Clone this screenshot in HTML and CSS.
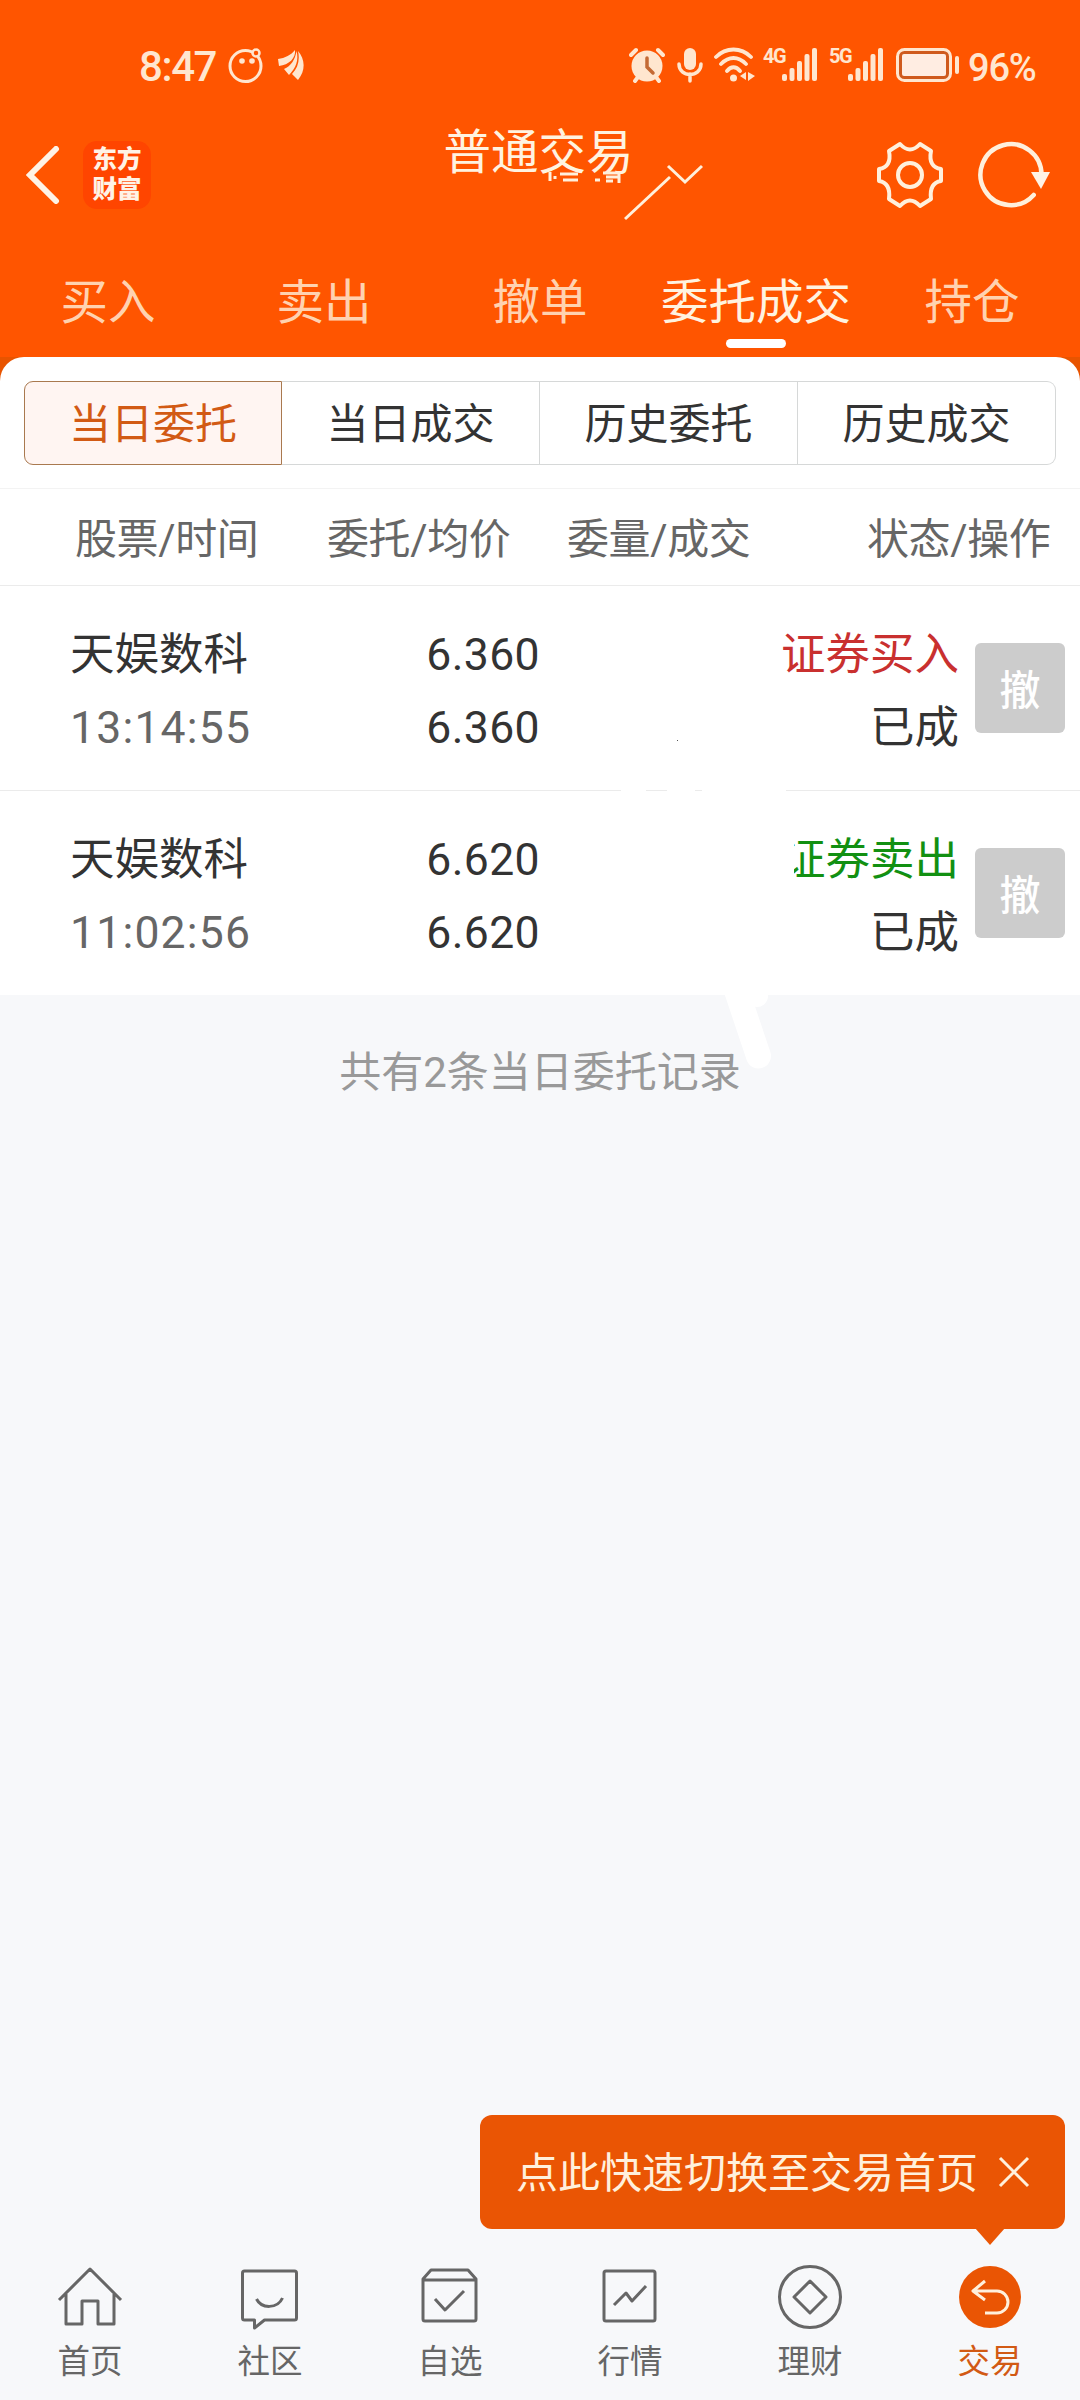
FILE: index.html
```html
<!DOCTYPE html>
<html lang="zh-CN">
  <head>
    <meta charset="UTF-8" />
    <meta name="viewport" content="width=device-width, initial-scale=1.0" />
    <title>普通交易</title>
    <link rel="stylesheet" href="styles.css">
  </head>
  <body>
    <header class="header">
      <div class="status-bar">
        <div class="status-left">
          <span class="clock">8:47</span>
          <svg class="icon-face" width="36" height="36" viewBox="0 0 36 36">
            <circle cx="17.500" cy="19" r="15.500" fill="none" stroke="currentColor" stroke-width="3" />
            <circle cx="28" cy="6" r="3.500" fill="#ff5500" stroke="currentColor" stroke-width="2.500" />
            <circle cx="14" cy="14" r="2.800" fill="currentColor" />
            <circle cx="24" cy="14" r="2.800" fill="currentColor" />
          </svg>
          <svg class="icon-wing" width="28" height="32" viewBox="0 0 28 32" fill="currentColor">
            <path d="M1 10C8 9 14 6 18 1C19 9 12 16 2 17Z" />
            <path d="M19.500 2C22 11 19 19 12 26L7 20C14 17 18 11 19.500 2Z" />
            <path d="M21 2C28 10 29 21 21 31L15 25C21 19 23 11 21 2Z" />
          </svg>
        </div>
        <div class="status-right">
          <svg width="36" height="36" viewBox="0 0 36 36">
            <circle cx="18" cy="19" r="15.500" fill="currentColor" />
            <path d="M2 8L7 3M34 8L29 3M6 34L9 30M30 34L27 30" stroke="currentColor" stroke-width="4" stroke-linecap="round" />
            <path d="M18 11V20L24 26" fill="none" stroke="#c46a35" stroke-width="3.500" stroke-linecap="round" />
          </svg>
          <svg class="icon-mic" width="26" height="36" viewBox="0 0 26 36">
            <rect x="7" y="1" width="12" height="22" rx="6" fill="currentColor" />
            <path d="M2 17C2 31 24 31 24 17M13 27V34" fill="none" stroke="currentColor" stroke-width="3.500" stroke-linecap="round" />
          </svg>
          <svg class="icon-wifi" width="42" height="36" viewBox="0 0 42 36">
            <path d="M2 10C12 0 27 0 37 10M7 17C15 9 24 9 32 17M13 24C17 19 22 19 26 24" fill="none" stroke="currentColor" stroke-width="3.800" stroke-linecap="round" />
            <circle cx="19.500" cy="31" r="3.500" fill="currentColor" />
            <path d="M26 29L32 25V33ZM34 25L41 29L34 34Z" fill="currentColor" />
          </svg>
          <span class="net">4G</span>
          <svg class="icon-bars" width="36" height="36" viewBox="0 0 36 36" fill="currentColor">
            <rect x="0" y="27" width="5" height="7" rx="2" />
            <rect x="7.500" y="21" width="5" height="13" rx="2" />
            <rect x="15" y="14" width="5" height="20" rx="2" />
            <rect x="22.500" y="7" width="5" height="27" rx="2" />
            <rect x="30" y="1" width="5" height="33" rx="2" />
          </svg>
          <span class="net net-5g">5G</span>
          <svg class="icon-bars" width="36" height="36" viewBox="0 0 36 36" fill="currentColor">
            <rect x="0" y="27" width="5" height="7" rx="2" />
            <rect x="7.500" y="21" width="5" height="13" rx="2" />
            <rect x="15" y="14" width="5" height="20" rx="2" />
            <rect x="22.500" y="7" width="5" height="27" rx="2" />
            <rect x="30" y="1" width="5" height="33" rx="2" />
          </svg>
          <svg class="icon-battery" width="64" height="36" viewBox="0 0 64 36">
            <rect x="1.500" y="2.500" width="53" height="31" rx="7" fill="#cf5a1d" stroke="currentColor" stroke-width="3" />
            <rect x="6" y="7" width="44" height="22" rx="2" fill="#ffede2" />
            <rect x="59" y="9" width="4" height="18" rx="2" fill="currentColor" />
          </svg>
          <span class="percent">96%</span>
        </div>
      </div>

      <div class="title-bar">
        <div class="title-left">
          <svg width="34" height="58" viewBox="0 0 34 58">
            <path d="M30 3L4 29L30 55" fill="none" stroke="#fff3e6" stroke-width="6" stroke-linecap="round" />
          </svg>
          <div class="logo">东方<br>财富</div>
        </div>
        <h1 class="title">普通交易</h1>
        <svg class="title-mark" width="160" height="60" viewBox="0 0 160 60" fill="none" stroke="#fff0dc">
          <path d="M7 9V18M12 13V16M17 11H35M20 17H35M60 10H76M63 14H76M76 8V20M63 18H70M52 17H57" stroke-width="3" />
          <path d="M82 56L127 14" stroke-width="3" />
          <path d="M125 3L142 19L159 3" stroke-width="3" />
        </svg>
        <div class="title-right">
          <svg width="68" height="68" viewBox="0 0 68 68" fill="none" stroke="#fff0dc" stroke-width="4" stroke-linejoin="round">
            <path d="M24 3Q34 14 44 3L55 10Q52 26 65 28V40Q53 42 55 58L44 65Q34 54 24 65L13 58Q15 42 3 40V28Q16 26 13 10Z" />
            <circle cx="34" cy="34" r="12" />
          </svg>
          <svg width="74" height="68" viewBox="0 0 74 68">
            <path d="M56.700 54A30.500 30.500 0 1 1 64.500 34" fill="none" stroke="#fff0dc" stroke-width="4.500" stroke-linecap="round" />
            <path d="M54 31H73L64 48Z" fill="#fff3e6" />
          </svg>
        </div>
      </div>

      <nav class="tabs">
        <a class="tab">买入</a>
        <a class="tab">卖出</a>
        <a class="tab">撤单</a>
        <a class="tab active">委托成交</a>
        <a class="tab">持仓</a>
      </nav>
    </header>

    <main class="content">
      <div class="sheet">
        <div class="segments">
          <div class="segment active">当日委托</div>
          <div class="segment">当日成交</div>
          <div class="segment">历史委托</div>
          <div class="segment">历史成交</div>
        </div>
        <div class="table-head">
          <span>股票/时间</span>
          <span>委托/均价</span>
          <span>委量/成交</span>
          <span>状态/操作</span>
        </div>

        <div class="order">
          <div class="stock">
            <p>天娱数科</p>
            <p class="time">13:14:55</p>
          </div>
          <div class="price">
            <p>6.360</p>
            <p>6.360</p>
          </div>
          <div class="state">
            <p class="buy">证券买入</p>
            <p>已成</p>
          </div>
          <button class="cancel">撤</button>
          <i class="dot"></i>
          <i class="gap gap-1"></i>
          <i class="gap gap-2"></i>
          <i class="gap gap-3"></i>
        </div>
        <div class="order">
          <div class="stock">
            <p>天娱数科</p>
            <p class="time">11:02:56</p>
          </div>
          <div class="price">
            <p>6.620</p>
            <p>6.620</p>
          </div>
          <div class="state">
            <p class="sell">证券卖出</p>
            <p>已成</p>
          </div>
          <button class="cancel">撤</button>
        </div>
      </div>

      <div class="summary">
        <p>共有2条当日委托记录</p>
        <svg class="smudge" width="60" height="80" viewBox="0 0 60 80">
          <path d="M16 -6L38.500 61" stroke="#fff" stroke-width="25" stroke-linecap="round" />
          <circle cx="37" cy="1" r="11" fill="#fff" />
        </svg>
      </div>
    </main>

    <footer class="bottom">
      <div class="tip">
        <span>点此快速切换至交易首页</span>
        <svg width="32" height="32" viewBox="0 0 32 32">
          <path d="M2 2L30 30M30 2L2 30" stroke="#fff0dc" stroke-width="3" />
        </svg>
      </div>
      <nav class="bottom-nav">
        <a class="nav-item">
          <svg width="68" height="68" viewBox="0 0 68 68">
            <path d="M3 36L34 5L65 36M10 30V60H26V37H42V60H58V30" />
          </svg>
          <span>首页</span>
        </a>
        <a class="nav-item">
          <svg width="68" height="68" viewBox="0 0 68 68">
            <path d="M8.500 7H58.500Q60.500 7 60.500 9V54Q60.500 56 58.500 56H28.500L18.500 64V56H8.500Q6.500 56 6.500 54V9Q6.500 7 8.500 7ZM20.500 35C25.500 45 41.500 45 46.500 34" />
          </svg>
          <span>社区</span>
        </a>
        <a class="nav-item">
          <svg width="68" height="68" viewBox="0 0 68 68">
            <path d="M7 15L15 6H52L60 15V55Q60 57 58 57H9Q7 57 7 55ZM7 16H60M19 35L29 46L48 27" />
          </svg>
          <span>自选</span>
        </a>
        <a class="nav-item">
          <svg width="68" height="68" viewBox="0 0 68 68">
            <rect x="8" y="7" width="51" height="50" rx="2" />
            <path d="M18 41L30 29L36 37L50 22" />
          </svg>
          <span>行情</span>
        </a>
        <a class="nav-item">
          <svg width="68" height="68" viewBox="0 0 68 68">
            <circle cx="34" cy="33" r="30.500" />
            <path d="M34 17L50 33L34 49L18 33Z" />
          </svg>
          <span>理财</span>
        </a>
        <a class="nav-item active">
          <svg width="68" height="68" viewBox="0 0 68 68">
            <circle cx="34" cy="33" r="31" />
            <path d="M29 17L17 27L29 36M17 27H41A10.500 10.500 0 0 1 41 49H29" />
          </svg>
          <span>交易</span>
        </a>
      </nav>
    </footer>
  </body>
</html>
```

FILE: styles.css
```css
* {
  margin: 0;
  padding: 0;
  box-sizing: border-box;
}

body {
  width: 1080px;
  height: 2400px;
  display: flex;
  flex-direction: column;
  overflow: hidden;
  background-color: #f7f8fa;
  color: #333;
  font-family: Roboto, "Noto Sans CJK SC", sans-serif;
}

svg {
  display: block;
  flex: none;
}

.header {
  height: 357px;
  background-color: #ff5500;
}

/* phone status bar */
.status-bar {
  height: 130px;
  padding: 0 42px 0 139px;
  display: flex;
  justify-content: space-between;
  align-items: center;
  color: #ffe6cf;
}

.status-left,
.status-right {
  display: flex;
  align-items: center;
}

.clock {
  font-size: 42px;
  line-height: 50px;
  width: 77px;
  font-weight: 500;
  letter-spacing: -1.4px;
  padding-top: 4px;
}

.icon-face {
  margin-left: 12px;
}

.icon-wing {
  margin-left: 13px;
}

.icon-mic {
  margin-left: 12px;
}

.icon-wifi {
  margin-left: 11px;
}

.net {
  width: 27px;
  font-size: 20px;
  line-height: 20px;
  font-weight: bold;
  letter-spacing: -1.5px;
  white-space: nowrap;
  margin: -18px -8px 0 7px;
}

.net-5g {
  margin-left: 11px;
}

.icon-battery {
  margin-left: 12px;
}

.percent {
  width: 70px;
  margin-left: 8px;
  padding-top: 5px;
  font-size: 38px;
  line-height: 46px;
  font-weight: 500;
  letter-spacing: -1.2px;
}

/* title */
.title-bar {
  position: relative;
  height: 120px;
  padding: 0 29px 0 26px;
  display: flex;
  justify-content: space-between;
  align-items: center;
}

.title-left,
.title-right {
  display: flex;
  align-items: center;
  margin-top: -31px;
}

.title-left {
  gap: 23px;
}

.title-right {
  gap: 33px;
}

.logo {
  width: 68px;
  height: 68px;
  padding-top: 4px;
  border-radius: 14px;
  background-color: #ff4500;
  color: #fff3e6;
  font-size: 24.5px;
  line-height: 30px;
  font-weight: 900;
  text-align: center;
}

.title {
  font-size: 47.5px;
  line-height: 60px;
  font-weight: normal;
  color: #fff3e0;
  margin: -75px 0 0 50px;
}

.title-mark {
  position: absolute;
  left: 543px;
  top: 33px;
}

.tabs {
  height: 107px;
  display: grid;
  grid-template-columns: repeat(5, 1fr);
}

.tab {
  display: flex;
  flex-direction: column;
  align-items: center;
  padding-top: 21px;
  font-size: 47.5px;
  line-height: 64px;
  color: #ffd2b0;
}

.tab.active {
  color: #fff3e0;
}

.tab.active::after {
  content: "";
  width: 60px;
  height: 9px;
  margin-top: 4px;
  border-radius: 5px;
  background-color: #fff;
}

/* orders */
.content {
  flex: 1;
  background: linear-gradient(#e85400, #e85400) no-repeat 0 0 / 100% 30px;
}

.sheet {
  height: 638px;
  padding-top: 24px;
  border-radius: 24px 24px 0 0;
  background-color: #fff;
}

.segments {
  display: grid;
  grid-template-columns: repeat(4, 1fr);
  margin: 0 24px;
}

.segment {
  height: 84px;
  border: 1px solid #d6d8d8;
  border-left-width: 0;
  font-size: 42px;
  line-height: 86px;
  text-align: center;
}

.segment:last-child {
  border-radius: 0 9px 9px 0;
}

.segment.active {
  border: 1px solid #a9794f;
  border-radius: 9px 0 0 9px;
  background-color: #fff5f2;
  color: #d25a14;
}

.table-head {
  height: 98px;
  margin-top: 23px;
  padding: 0 31px 0 75px;
  display: grid;
  grid-template-columns: 252px 240px 300px 1fr;
  border-top: 1px solid #f3f3f3;
  border-bottom: 1px solid #ebebeb;
  font-size: 42px;
  line-height: 101px;
  letter-spacing: -0.4px;
  color: #666;
  white-space: nowrap;
}

.order {
  position: relative;
  height: 205px;
  padding: 0 15px 0 70px;
  display: flex;
  align-items: center;
  border-bottom: 1px solid #ebebeb;
  font-size: 44.5px;
  line-height: 73px;
}

.order:last-child {
  height: 204px;
  border-bottom: none;
}

.stock,
.price,
.state {
  padding-top: 7px;
}

.stock {
  width: 240px;
}

.time {
  color: #666;
  letter-spacing: 1.2px;
}

.price {
  width: 230px;
  text-align: right;
  letter-spacing: 0.4px;
}

.state {
  flex: 1;
  text-align: right;
}

.buy {
  color: #c9302f;
}

.sell {
  position: relative;
  color: #129012;
}

/* hides the left edge of the label */
.sell::before {
  content: "";
  position: absolute;
  right: 165px;
  top: 0;
  width: 24px;
  height: 70px;
  background-color: #fff;
}

.cancel {
  width: 90px;
  height: 90px;
  margin-left: 16px;
  padding-bottom: 2px;
  border: none;
  border-radius: 6px;
  background-color: #ccc;
  color: #fff;
  font-family: inherit;
  font-size: 41px;
  font-weight: 500;
}

.dot {
  position: absolute;
  left: 677px;
  top: 154px;
  width: 1px;
  height: 1px;
  background-color: #555;
}

.gap {
  position: absolute;
  bottom: -1px;
  height: 1px;
  background-color: #fff;
}

.gap-1 {
  left: 621px;
  width: 25px;
}

.gap-2 {
  left: 667px;
  width: 28px;
}

.gap-3 {
  left: 702px;
  width: 84px;
}

.summary {
  position: relative;
  padding-top: 47px;
  font-size: 42px;
  line-height: 62px;
  color: #999;
  text-align: center;
}

.smudge {
  position: absolute;
  left: 720px;
  top: 0;
}

/* bottom */
.bottom {
  height: 285px;
}

.tip {
  position: relative;
  width: 585px;
  height: 114px;
  margin-left: 480px;
  padding: 0 35px 0 36px;
  display: flex;
  justify-content: space-between;
  align-items: center;
  border-radius: 12px;
  background-color: #ea5504;
  color: #fff0dc;
  font-size: 42px;
}

.tip span {
  padding-bottom: 6px;
}

.tip::after {
  content: "";
  position: absolute;
  left: 495px;
  top: 113px;
  border: 15px solid transparent;
  border-top: 17px solid #ea5504;
  border-bottom: none;
}

.bottom-nav {
  display: grid;
  grid-template-columns: repeat(6, 1fr);
  padding-top: 35px;
}

.nav-item {
  display: flex;
  flex-direction: column;
  align-items: center;
  font-size: 32.5px;
  line-height: 44px;
  color: #666;
}

.nav-item span {
  margin-top: 8px;
}

.nav-item svg {
  fill: none;
  stroke: #666;
  stroke-width: 3;
  stroke-linejoin: round;
}

.nav-item.active {
  color: #d25a14;
}

.nav-item.active circle {
  fill: #ea5504;
  stroke: none;
}

.nav-item.active path {
  stroke: #fff0dc;
}
```
